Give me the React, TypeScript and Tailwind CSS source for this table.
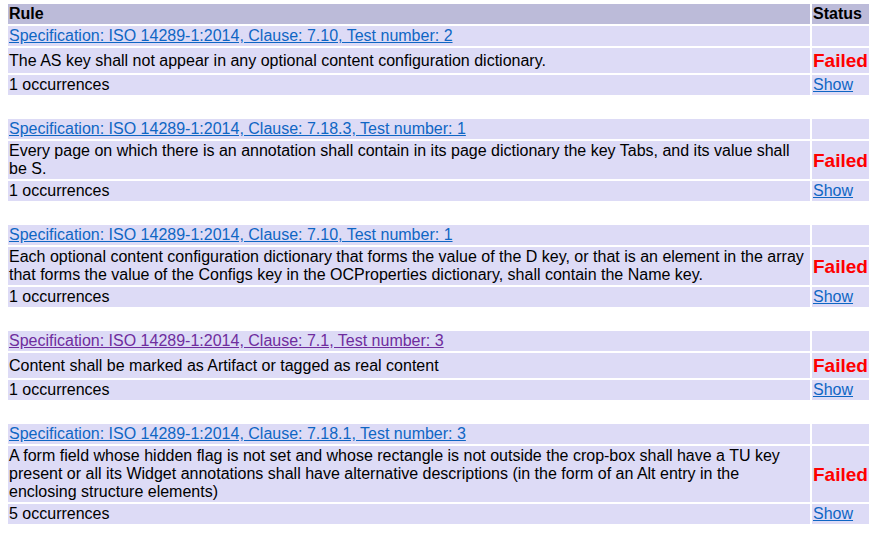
import React from "react";

type Rule = { spec: string; desc: string; occ: string; visited?: boolean };

const rules: Rule[] = [
  {
    spec: "Specification: ISO 14289-1:2014, Clause: 7.10, Test number: 2",
    desc: "The AS key shall not appear in any optional content configuration dictionary.",
    occ: "1 occurrences",
  },
  {
    spec: "Specification: ISO 14289-1:2014, Clause: 7.18.3, Test number: 1",
    desc: "Every page on which there is an annotation shall contain in its page dictionary the key Tabs, and its value shall be S.",
    occ: "1 occurrences",
  },
  {
    spec: "Specification: ISO 14289-1:2014, Clause: 7.10, Test number: 1",
    desc: "Each optional content configuration dictionary that forms the value of the D key, or that is an element in the array that forms the value of the Configs key in the OCProperties dictionary, shall contain the Name key.",
    occ: "1 occurrences",
  },
  {
    spec: "Specification: ISO 14289-1:2014, Clause: 7.1, Test number: 3",
    desc: "Content shall be marked as Artifact or tagged as real content",
    occ: "1 occurrences",
    visited: true,
  },
  {
    spec: "Specification: ISO 14289-1:2014, Clause: 7.18.1, Test number: 3",
    desc: "A form field whose hidden flag is not set and whose rectangle is not outside the crop-box shall have a TU key present or all its Widget annotations shall have alternative descriptions (in the form of an Alt entry in the enclosing structure elements)",
    occ: "5 occurrences",
  },
];

export default function App() {
  return (
    <div
      className="bg-white w-[883px] h-[534px] overflow-hidden pl-[6px] pt-[2px] text-black"
      style={{ fontFamily: '"Liberation Sans", Arial, sans-serif' }}
    >
      <table className="border-separate border-spacing-[2px] text-[16px] leading-[18px]">
        <tbody>
          <tr>
            <th className="w-[802px] h-[20px] p-[1px] text-left font-bold bg-[#bcbbd9]">Rule</th>
            <th className="w-[56px] h-[20px] p-[1px] text-left font-bold bg-[#bcbbd9]">Status</th>
          </tr>
          {rules.map((r, i) => (
            <React.Fragment key={i}>
              {i > 0 && (
                <tr>
                  <td className="h-[20px] p-[1px]" colSpan={2}></td>
                </tr>
              )}
              <tr>
                <td className="h-[20px] p-[1px] bg-[#dddbf6]">
                  <a
                    href="#"
                    className={
                      r.visited
                        ? "underline text-[#6f2d9e]"
                        : "underline text-[#0f66c4]"
                    }
                  >
                    {r.spec}
                  </a>
                </td>
                <td className="h-[20px] p-[1px] bg-[#dddbf6]"></td>
              </tr>
              <tr>
                <td className="p-[1px] bg-[#dddbf6] align-middle">{r.desc}</td>
                <td className="p-[1px] bg-[#dddbf6] align-middle">
                  <span className="font-bold text-[#ff0000] text-[19px] leading-[23px]">Failed</span>
                </td>
              </tr>
              <tr>
                <td className="h-[20px] p-[1px] bg-[#dddbf6]">{r.occ}</td>
                <td className="h-[20px] p-[1px] bg-[#dddbf6]">
                  <a href="#" className="underline text-[#0f66c4]">
                    Show
                  </a>
                </td>
              </tr>
            </React.Fragment>
          ))}
        </tbody>
      </table>
    </div>
  );
}
